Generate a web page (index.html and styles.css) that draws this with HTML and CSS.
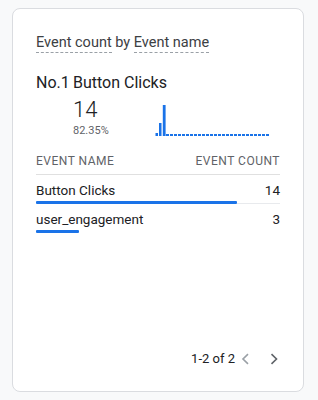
FILE: index.html
```html
<!DOCTYPE html>
<html lang="en">
<head>
    <meta charset="UTF-8">
    <meta name="viewport" content="width=device-width, initial-scale=1.0">
    <title>Event count by Event name</title>
    <link rel="stylesheet" href="styles.css">
</head>
<body>

<div class="card">
    <div class="card-title">
        <span class="dim">Event count</span> by <span class="dim">Event name</span>
    </div>

    <div class="top">
        <div class="rank">No.1</div>
        <div class="top-main">
            <div class="top-name">Button Clicks</div>
            <div class="top-row">
                <div class="top-value">
                    <div class="big">14</div>
                    <div class="pct">82.35%</div>
                </div>
                <svg class="spark" width="116" height="36" viewBox="0 0 116 36">
                    <rect x="0.5" y="31" width="2.5" height="3" fill="#1a73e8"/>
                    <rect x="4" y="21" width="2.5" height="13" fill="#1a73e8"/>
                    <rect x="7.8" y="3" width="2.8" height="31" fill="#1a73e8"/>
                    <line x1="11" y1="33" x2="114" y2="33" stroke="#1a73e8" stroke-width="2" stroke-dasharray="3 1"/>
                </svg>
            </div>
        </div>
    </div>

    <div class="events">
        <div class="head">
            <span>Event name</span>
            <span>Event count</span>
        </div>
        <div class="row">
            <div class="line"><span>Button Clicks</span><span>14</span></div>
            <div class="track"><div class="bar" style="width: 82.35%"></div><div class="rest"></div></div>
        </div>
        <div class="row">
            <div class="line"><span>user_engagement</span><span>3</span></div>
            <div class="track"><div class="bar" style="width: 17.65%"></div></div>
        </div>
    </div>

    <div class="pager">
        <span>1-2 of 2</span>
        <svg class="chev prev" width="8" height="12" viewBox="0 0 8 12"><path d="M7 1.2 L2 6 L7 10.8" fill="none" stroke="#9aa0a6" stroke-width="1.6"/></svg>
        <svg class="chev next" width="8" height="12" viewBox="0 0 8 12"><path d="M1.5 1.2 L6.5 6 L1.5 10.8" fill="none" stroke="#5f6368" stroke-width="1.6"/></svg>
    </div>
</div>

</body>
</html>
```

FILE: styles.css
```css
body { margin: 0; background-color: #f8f9fa; font-family: Roboto, Arial, sans-serif; color: #202124; }
.card {
    margin: 8px 0 0 12px;
    width: 292px;
    height: 384px;
    box-sizing: border-box;
    background: #fff;
    border: 1px solid #dadce0;
    border-radius: 8px;
    padding: 24px 23px 0 23px;
    display: flex;
    flex-direction: column;
}
.card-title { font-size: 14.5px; line-height: 20px; color: #3c4043; }
.dim { border-bottom: 1px dashed #9aa0a6; padding-bottom: 1px; }

.top { display: flex; margin-top: 18px; }
.rank { width: 37px; font-size: 16px; line-height: 24px; }
.top-name { font-size: 16px; line-height: 24px; }
.top-row { display: flex; align-items: flex-end; }
.top-value { width: 82px; }
.big { font-size: 22px; line-height: 26px; margin-top: 2px; font-weight: 300; color: #202124; }
.pct { font-size: 11px; line-height: 16px; color: #5f6368; }
.spark { display: block; margin-bottom: 1px; }

.events { margin-top: 14px; }
.head {
    display: flex; justify-content: space-between;
    font-size: 12px; line-height: 16px; letter-spacing: 0.5px; text-transform: uppercase;
    color: #5f6368; padding-bottom: 5px; border-bottom: 1px solid #e0e0e0;
}
.row { padding-top: 6px; font-size: 13.5px; }
.line { display: flex; justify-content: space-between; line-height: 18px; }
.track { display: flex; align-items: flex-end; height: 3px; margin-top: 2px; }
.bar { height: 3px; background: #1a73e8; border-radius: 1px; }
.rest { flex: 1; border-bottom: 1px solid #e8eaed; }

.pager {
    margin-top: auto;
    margin-bottom: 25px;
    padding-right: 2px;
    display: flex;
    justify-content: flex-end;
    align-items: center;
    font-size: 13px;
    color: #202124;
}
.prev { margin-left: 6px; }
.next { margin-left: 21px; }
```
